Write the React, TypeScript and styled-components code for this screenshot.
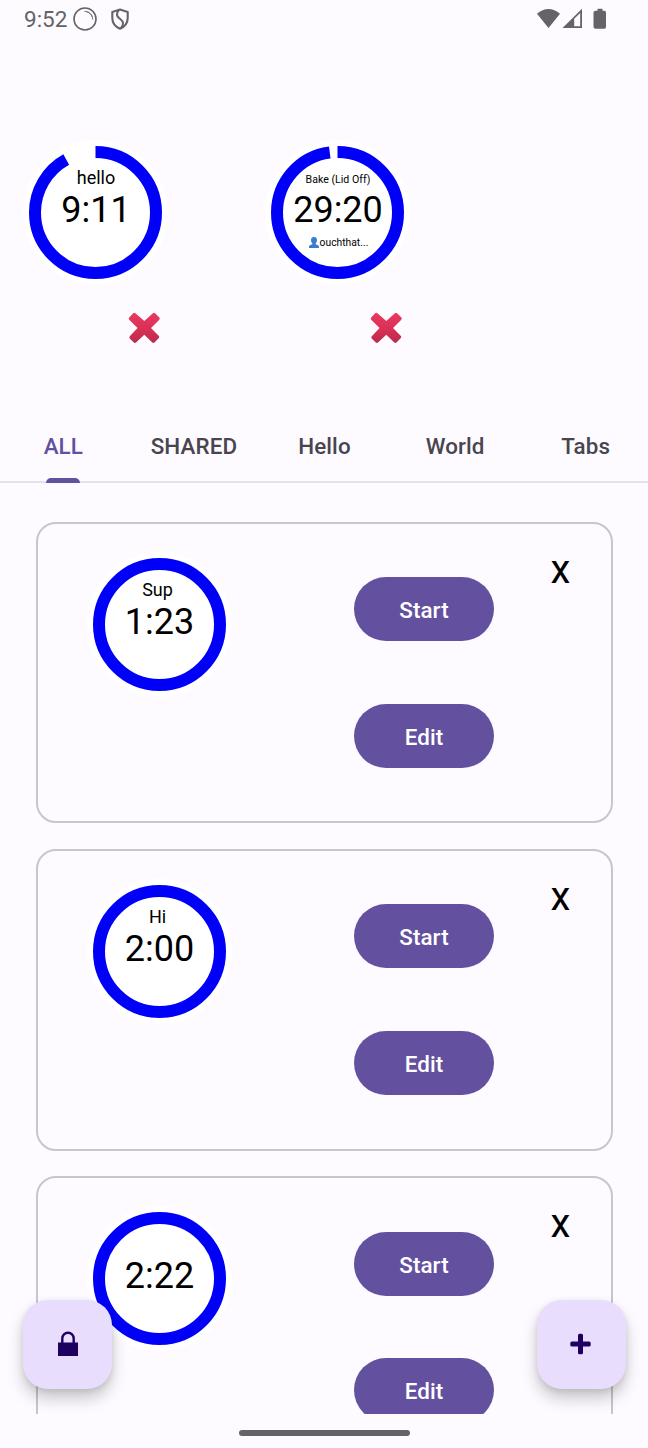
import React from 'react';
import styled, { createGlobalStyle } from 'styled-components';

const GlobalStyle = createGlobalStyle`
  * { box-sizing: border-box; }
  body { margin: 0; background: #fdfbff; font-family: Roboto, sans-serif; color: #000; }
  button { font: inherit; border: 0; padding: 0; margin: 0; background: none; color: inherit; }
`;

const Screen = styled.div`
  position: relative;
  display: flex;
  flex-direction: column;
  width: 648px;
  height: 1448px;
  overflow: hidden;
  background: #fdfbff;
`;

const StatusBar = styled.header`
  display: flex;
  align-items: center;
  flex: none;
  height: 38px;
  padding: 0 40px 0 24px;
  color: #656367;
  font-size: 22.5px;
`;

const StatusIcons = styled.div`
  display: flex;
  align-items: center;
  margin-left: auto;
`;

const RingIcon = styled.svg`
  margin-left: 5px;
`;

const ShieldIcon = styled.svg`
  margin-left: 12px;
`;

const ActiveTimers = styled.section`
  display: flex;
  flex: none;
  gap: 97px;
  height: 371.5px;
  padding: 102px 0 0 23px;
`;

const ActiveTimer = styled.div`
  display: flex;
  flex-direction: column;
  width: 145px;
`;

const CancelButton = styled.button`
  display: block;
  align-self: flex-end;
  width: 34px;
  height: 34px;
  margin: 26px 7px 0 0;
  svg { display: block; }
`;

const DialBox = styled.div`
  display: grid;
  flex: none;
  width: 145px;
  height: 145px;
  > * { grid-area: 1 / 1; }
`;

const DialText = styled.div<{ $running: boolean }>`
  display: grid;
  grid-template-rows: 22px 42px 24px;
  justify-items: center;
  align-content: start;
  padding-top: 27px;
  padding-left: ${(p) => (p.$running ? 1 : 0)}px;
`;

const DialLabel = styled.span<{ $small?: boolean; $shift?: number }>`
  grid-row: 1;
  font-size: ${(p) => (p.$small ? 10.6 : 18)}px;
  line-height: ${(p) => (p.$small ? 26 : 22)}px;
  padding-right: ${(p) => p.$shift ?? 0}px;
  white-space: nowrap;
`;

const DialTime = styled.span`
  grid-row: 2;
  font-size: 36px;
  line-height: 42px;
`;

const DialOwner = styled.span`
  grid-row: 3;
  display: flex;
  align-items: center;
  font-size: 10.3px;
  line-height: 24px;
`;

const Tabs = styled.nav`
  display: flex;
  flex: none;
  height: 73.5px;
  margin-left: -2px;
  border-bottom: 2px solid #e4e1ec;
`;

const Tab = styled.button<{ $active?: boolean }>`
  position: relative;
  flex: 0 0 130.6px;
  height: 72px;
  color: ${(p) => (p.$active ? '#63519f' : '#48454e')};
  font-size: 22.4px;
  font-weight: 500;
  letter-spacing: 0.1px;
`;

const Indicator = styled.span`
  position: absolute;
  left: 48px;
  bottom: -1px;
  width: 34px;
  height: 5px;
  border-radius: 5px 5px 0 0;
  background: #63519f;
`;

const TimerList = styled.main`
  display: flex;
  flex-direction: column;
  flex: none;
  gap: 25.6px;
  height: 931px;
  padding: 38.5px 35.2px 0 36px;
  overflow: hidden;
`;

const Card = styled.article`
  display: flex;
  flex: none;
  height: 301.8px;
  border: 2px solid #c9c5d0;
  border-radius: 20px;
`;

const CardDial = styled.div`
  width: 316px;
  padding: 28.2px 0 0 49px;
`;

const CardActions = styled.div`
  display: flex;
  flex-direction: column;
  gap: 62.5px;
  width: 140px;
  padding-top: 53.5px;
`;

const PillButton = styled.button`
  width: 140px;
  height: 64px;
  border-radius: 32px;
  background: #63519f;
  color: #fff;
  font-size: 22.4px;
  font-weight: 500;
  letter-spacing: 0.1px;
  line-height: 66px;
`;

const RemoveButton = styled.button`
  align-self: flex-start;
  margin: 28px 0 0 56.6px;
  font-size: 40px;
  line-height: 36px;
`;

const Fab = styled.button<{ $side: 'left' | 'right' }>`
  position: absolute;
  ${(p) => (p.$side === 'left' ? 'left: 23.4px;' : 'right: 22.3px;')}
  top: 1299.5px;
  display: grid;
  place-items: center;
  width: 89px;
  height: 89px;
  border-radius: 25px;
  background: #e8ddfd;
  box-shadow: 0 10px 16px rgba(0, 0, 0, 0.2), 0 2px 6px rgba(0, 0, 0, 0.1);
`;

const GestureBar = styled.footer`
  position: relative;
  display: flex;
  justify-content: center;
  flex: none;
  height: 34px;
  padding-top: 16px;
  background: #fdfbff;
  &::before {
    content: '';
    width: 171.5px;
    height: 6px;
    margin-left: 1px;
    border-radius: 3px;
    background: #656367;
  }
`;

type DialProps = {
  label?: string;
  small?: boolean;
  shift?: number;
  time: string;
  owner?: string;
  elapsed?: number;
};

function Dial({ label, small, shift, time, owner, elapsed = 0 }: DialProps) {
  const c = 2 * Math.PI * 60.5;
  return (
    <DialBox>
      <svg width="145" height="145" viewBox="0 0 145 145">
        <circle cx="72.5" cy="72.5" r="72.5" fill="#fff" />
        <circle
          cx="72.5"
          cy="72.5"
          r="60.5"
          fill="none"
          stroke="#0000f8"
          strokeWidth="12"
          strokeDasharray={elapsed ? `${c * (1 - elapsed)} ${c}` : undefined}
          transform="rotate(-90 72.5 72.5)"
        />
      </svg>
      <DialText $running={elapsed > 0}>
        {label && <DialLabel $small={small} $shift={shift}>{label}</DialLabel>}
        <DialTime>{time}</DialTime>
        {owner && (
          <DialOwner>
            <svg width="12" height="12" viewBox="0 0 12 12">
              <path d="M1 11V9.9C1 8.4 2.2 7.8 4.4 7.3V6.5C3.5 5.7 3 4.5 3 3C3 1.1 4.2 0 6 0S9 1.1 9 3C9 4.5 8.5 5.7 7.6 6.5V7.3C9.8 7.8 11 8.4 11 9.9V11Z" fill="#3b7bd0" />
            </svg>
            {owner}
          </DialOwner>
        )}
      </DialText>
    </DialBox>
  );
}

function Cancel() {
  return (
    <CancelButton aria-label="Cancel timer">
      <svg width="34" height="34" viewBox="0 0 34 34">
        <defs>
          <linearGradient id="cross" x1="0" y1="0" x2="0" y2="1">
            <stop offset="0" stopColor="#ea3a60" />
            <stop offset="0.5" stopColor="#db3056" />
            <stop offset="1" stopColor="#b82c4c" />
          </linearGradient>
        </defs>
        <path
          d="M8.4 2.2 17.3 10 25.9 2.2Q27 1.4 28.1 2.3L32.4 6.6Q33.2 7.6 32.3 8.7L24 17 31.9 25Q32.7 26 31.8 27.1L27.5 31.5Q26.4 32.3 25.3 31.5L17.3 23.8 9 31.5Q7.9 32.3 6.8 31.5L2.7 27.4Q1.9 26.4 2.8 25.3L10.6 17 2.2 8.7Q1.4 7.6 2.2 6.5L6.2 2.3Q7.3 1.4 8.4 2.2Z"
          fill="url(#cross)"
        />
      </svg>
    </CancelButton>
  );
}

const tabs = ['ALL', 'SHARED', 'Hello', 'World', 'Tabs'];
const timers = [
  { label: 'Sup', shift: 4, time: '1:23' },
  { label: 'Hi', shift: 4, time: '2:00' },
  { time: '2:22' },
];

export default function App() {
  return (
    <Screen>
      <GlobalStyle />
      <StatusBar>
        <span>9:52</span>
        <RingIcon width="26" height="26" viewBox="0 0 26 26" fill="none" stroke="#656367">
          <circle cx="13" cy="13" r="11" strokeWidth="1.6" />
          <path d="M12.5 5.3C17 5.3 20.7 8.8 20.7 13.5M14.5 5.8C17.5 6.4 19.5 8.4 20.3 11" strokeWidth="0.9" />
        </RingIcon>
        <ShieldIcon width="20" height="24" viewBox="0 0 20 24" fill="none" stroke="#656367" strokeWidth="2.1">
          <path d="M10 2.5 17.7 5V11C17.7 16 14.5 19.8 10 21.7C5.5 19.8 2.3 16 2.3 11V5Z" strokeLinejoin="round" />
          <path d="M9 3C5 8 7.5 10 10.5 12.2C13.5 14.4 14 17.5 11 21" strokeWidth="2" />
        </ShieldIcon>
        <StatusIcons>
          <svg width="71" height="22" viewBox="0 0 71 22" fill="#656367">
            <path d="M0 5.7C7-.6 16-.6 23 5.7L11.5 20Z" />
            <path d="M25.5 20 45 .8V20Z" />
            <path d="M37.2 10.8 43.2 5V18.3H37.2Z" fill="#fdfbff" />
            <path d="M60.5.8H65.5V2.7H67.5Q69 2.7 69 4.5V18.8Q69 20.8 67.5 20.8H58.5Q56.5 20.8 56.5 18.8V4.5Q56.5 2.7 58.5 2.7H60.5Z" />
          </svg>
        </StatusIcons>
      </StatusBar>
      <ActiveTimers>
        <ActiveTimer>
          <Dial label="hello" time="9:11" elapsed={0.082} />
          <Cancel />
        </ActiveTimer>
        <ActiveTimer>
          <Dial label="Bake (Lid Off)" small time="29:20" owner="ouchthat..." elapsed={0.0222} />
          <Cancel />
        </ActiveTimer>
      </ActiveTimers>
      <Tabs>
        {tabs.map((name, i) => (
          <Tab key={name} $active={i === 0}>
            {name}
            {i === 0 && <Indicator />}
          </Tab>
        ))}
      </Tabs>
      <TimerList>
        {timers.map((timer) => (
          <Card key={timer.time}>
            <CardDial>
              <Dial {...timer} />
            </CardDial>
            <CardActions>
              <PillButton>Start</PillButton>
              <PillButton>Edit</PillButton>
            </CardActions>
            <RemoveButton>x</RemoveButton>
          </Card>
        ))}
      </TimerList>
      <Fab $side="left" aria-label="Lock">
        <svg width="22" height="26" viewBox="0 0 22 26">
          <path d="M1 11.5H21V25H1Z" fill="#1e0060" />
          <path d="M5.3 12V7.5A5.7 5.7 0 0 1 16.7 7.5V12" fill="none" stroke="#1e0060" strokeWidth="2.4" />
        </svg>
      </Fab>
      <Fab $side="right" aria-label="Add timer">
        <svg width="22" height="22" viewBox="0 0 22 22" fill="#1e0060">
          <rect x="8" y="0.8" width="5" height="20.4" rx="1.5" />
          <rect x="0.3" y="8.5" width="20.4" height="5" rx="1.5" />
        </svg>
      </Fab>
      <GestureBar />
    </Screen>
  );
}
